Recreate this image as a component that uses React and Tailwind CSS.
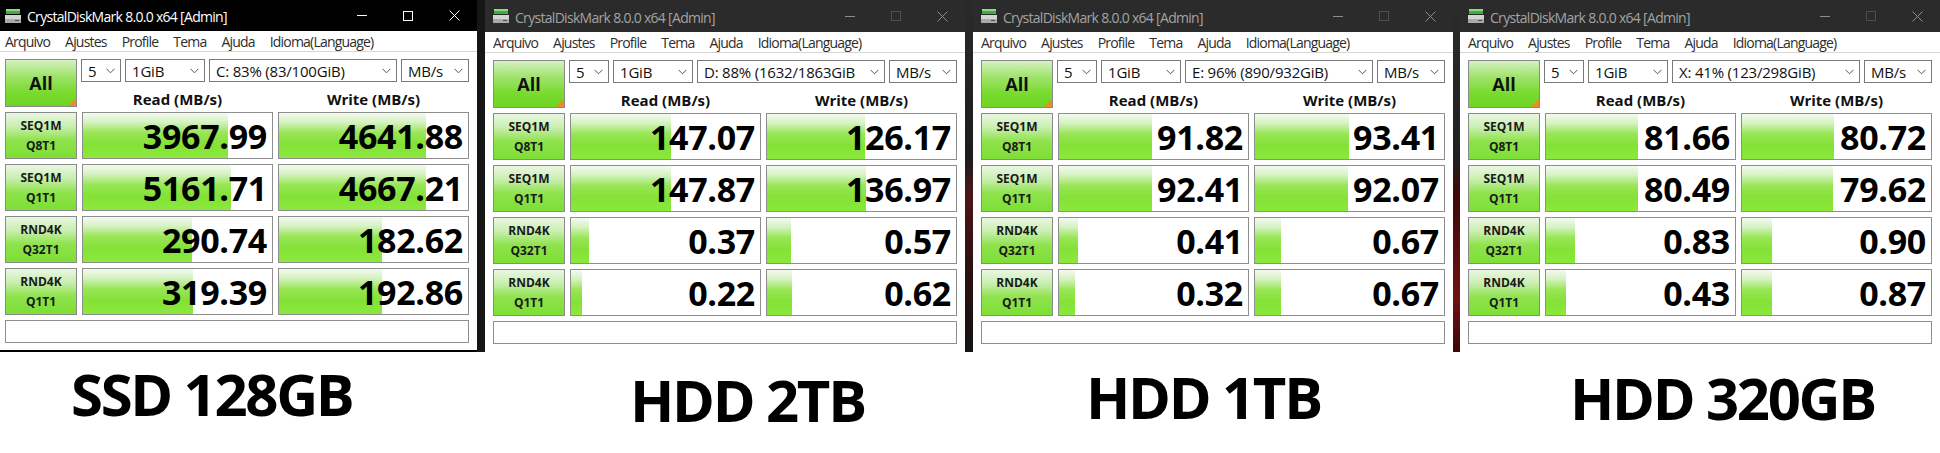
const panels = [
  {
    drive: "C: 83% (83/100GiB)",
    label: "SSD 128GB",
    labelPos: "ml-[71px] mt-[13px]",
    values: [
      [3967.99, 4641.88],
      [5161.71, 4667.21],
      [290.74, 182.62],
      [319.39, 192.86],
    ],
  },
  {
    drive: "D: 88% (1632/1863GiB",
    label: "HDD 2TB",
    labelPos: "ml-[145px] mt-[19px]",
    values: [
      [147.07, 126.17],
      [147.87, 136.97],
      [0.37, 0.57],
      [0.22, 0.62],
    ],
  },
  {
    drive: "E: 96% (890/932GiB)",
    label: "HDD 1TB",
    labelPos: "ml-[113px] mt-[16px]",
    values: [
      [91.82, 93.41],
      [92.41, 92.07],
      [0.41, 0.67],
      [0.32, 0.67],
    ],
  },
  {
    drive: "X: 41% (123/298GiB)",
    label: "HDD 320GB",
    labelPos: "ml-[110px] mt-[17px]",
    values: [
      [81.66, 80.72],
      [80.49, 79.62],
      [0.83, 0.9],
      [0.43, 0.87],
    ],
  },
];

const tests = [
  ["SEQ1M", "Q8T1"],
  ["SEQ1M", "Q1T1"],
  ["RND4K", "Q32T1"],
  ["RND4K", "Q1T1"],
];

// CrystalDiskMark meter is log scale
const meter = (v) => Math.min(1, Math.max(0, Math.log10(v * 10) / 6));

function AppIcon() {
  return (
    <svg width="16" height="16" viewBox="0 0 16 16">
      <rect x="1" y="1" width="14" height="5" fill="#3fae3f" />
      <rect x="1" y="1" width="14" height="2" fill="#8ed88a" />
      <rect x="0" y="7" width="16" height="8" fill="#d4d4d4" />
      <rect x="0" y="11" width="16" height="4" fill="#a9a9a9" />
      <rect x="10" y="12" width="4" height="1" fill="#4a4a4a" />
    </svg>
  );
}

function Chevron() {
  return (
    <svg width="9" height="6" viewBox="0 0 9 6" className="shrink-0">
      <polyline points="0.5,0.8 4.5,4.8 8.5,0.8" fill="none" stroke="#555" strokeWidth="1" />
    </svg>
  );
}

function TitleBar({ active }) {
  const glyph = active ? "#ffffff" : "#8d8d8d";
  return (
    <div
      className={`flex items-center shrink-0 ${
        active ? "h-[31px] bg-black text-white" : "h-[32px] bg-[#2b2b2b] text-[#a3a3a3]"
      }`}
    >
      <div className="pl-2 pr-[6px] flex items-center">
        <AppIcon />
      </div>
      <span className="text-[14px] tracking-[-0.7px] pt-[2px]">CrystalDiskMark 8.0.0 x64 [Admin]</span>
      <div className="ml-auto flex h-full">
        <div className="w-[46px] flex items-center justify-center">
          <div className="w-[10px] h-px" style={{ background: glyph }} />
        </div>
        <div className="w-[46px] flex items-center justify-center">
          <div
            className="w-[10px] h-[10px] border"
            style={{ borderColor: active ? "#ffffff" : "#4d4d4d" }}
          />
        </div>
        <div className="w-[46px] flex items-center justify-center">
          <svg width="11" height="11" viewBox="0 0 11 11">
            <path d="M0.5 0.5 L10.5 10.5 M10.5 0.5 L0.5 10.5" stroke={glyph} strokeWidth="1" />
          </svg>
        </div>
      </div>
    </div>
  );
}

function MenuBar() {
  return (
    <div className="h-[21px] shrink-0 flex items-center gap-[15px] pl-2 border-b border-[#d6d6d6] text-[14px] tracking-[-0.8px] text-[#2e2e2e]">
      <span>Arquivo</span>
      <span>Ajustes</span>
      <span>Profile</span>
      <span>Tema</span>
      <span>Ajuda</span>
      <span>Idioma(Language)</span>
    </div>
  );
}

function Select({ text, width }) {
  return (
    <div
      className={`${width} h-[23px] shrink-0 border border-[#7a7a7a] bg-white flex items-center justify-between pl-[6px] pr-[5px] overflow-hidden`}
    >
      <span className="text-[15px] leading-[20px] whitespace-nowrap tracking-[-0.2px] text-[#111]">
        {text}
      </span>
      <Chevron />
    </div>
  );
}

function ValueCell({ value }) {
  return (
    <div className="relative h-[47px] border border-[#8e8e8e] bg-white overflow-hidden">
      <div
        className="absolute inset-y-0 left-0 bg-[linear-gradient(to_bottom,#f3faef_0%,#d6f2c3_20%,#98e655_44%,#84e136_70%,#8be83d_100%)]"
        style={{ width: `${meter(value) * 100}%` }}
      />
      <div className="relative h-full flex items-center justify-end pr-[5px] text-[34px] font-bold leading-none text-black tracking-[-0.3px]">
        {value.toFixed(2)}
      </div>
    </div>
  );
}

function Window({ panel, active }) {
  return (
    <div
      className={`w-[480px] shrink-0 bg-white flex flex-col ${
        active ? "-ml-[3px] h-[352px] border-b-2 border-black" : "h-[350px]"
      }`}
    >
      <TitleBar active={active} />
      <MenuBar />
      <div className="px-2 pt-[7px] flex flex-col gap-[5px]">
        {/* top controls */}
        <div className="flex gap-[5px]">
          <div className="relative w-[72px] h-[48px] shrink-0 border border-[#8a8a8a] bg-[linear-gradient(to_bottom,#d5f2c2_0%,#9fe36b_35%,#78db2e_70%,#6fd426_100%)] flex items-center justify-center">
            <span className="text-[18px] font-bold text-[#111]">All</span>
            <div className="absolute bottom-0 right-0 w-0 h-0 border-l-[8px] border-l-transparent border-b-[8px] border-b-[#ee8a27]" />
          </div>
          <div className="w-[387px] flex flex-col">
            <div className="flex gap-[4px] -ml-px">
              <Select text="5" width="w-[40px]" />
              <Select text="1GiB" width="w-[80px]" />
              <Select text={panel.drive} width="w-[188px]" />
              <Select text="MB/s" width="w-[68px]" />
            </div>
            <div className="h-[25px] grid grid-cols-2 gap-[5px] items-end text-[15px] font-bold leading-none text-[#111]">
              <div className="text-center">Read (MB/s)</div>
              <div className="text-center">Write (MB/s)</div>
            </div>
          </div>
        </div>

        {/* result rows */}
        {panel.values.map((row, i) => (
          <div key={i} className="grid grid-cols-[72px_191px_191px] gap-[5px]">
            <div className="h-[47px] border border-[#8a8a8a] bg-[linear-gradient(to_bottom,#eaf7e2_0%,#c9eeb0_30%,#8fe34d_60%,#7ddf35_100%)] flex flex-col items-center justify-center text-[12px] font-bold leading-[20px] text-[#1a1a1a]">
              <span>{tests[i][0]}</span>
              <span>{tests[i][1]}</span>
            </div>
            <ValueCell value={row[0]} />
            <ValueCell value={row[1]} />
          </div>
        ))}

        {/* status */}
        <div className="h-[23px] border border-[#8e8e8e] bg-white" />
      </div>
    </div>
  );
}

export default function App() {
  return (
    <div className="w-[1940px] h-[453px] bg-white overflow-hidden font-['Open_Sans','Noto_Sans',sans-serif]">
      <div className="flex items-start h-[352px]">
        <Window panel={panels[0]} active />
        <div className="w-[8px] h-[352px] shrink-0 bg-[#161616]" />
        <Window panel={panels[1]} />
        <div className="w-[8px] h-[352px] shrink-0 bg-[linear-gradient(to_bottom,#2a2a2a_0%,#1c1c1c_45%,#4d1616_55%,#2b0f0f_78%,#141414_100%)]" />
        <Window panel={panels[2]} />
        <div className="w-[7px] h-[352px] shrink-0 bg-[linear-gradient(to_bottom,#2b2b2b_0%,#202020_45%,#3f0909_55%,#6e1212_85%,#3a0707_100%)]" />
        <Window panel={panels[3]} />
      </div>

      {/* captions */}
      <div className="flex">
        {panels.map((p, i) => (
          <div
            key={i}
            className={`shrink-0 ${["w-[485px]", "w-[488px]", "w-[487px]", "w-[480px]"][i]}`}
          >
            <div
              className={`${p.labelPos} text-[58px] font-bold leading-none tracking-[-0.04em] text-black whitespace-nowrap`}
            >
              {p.label}
            </div>
          </div>
        ))}
      </div>
    </div>
  );
}
